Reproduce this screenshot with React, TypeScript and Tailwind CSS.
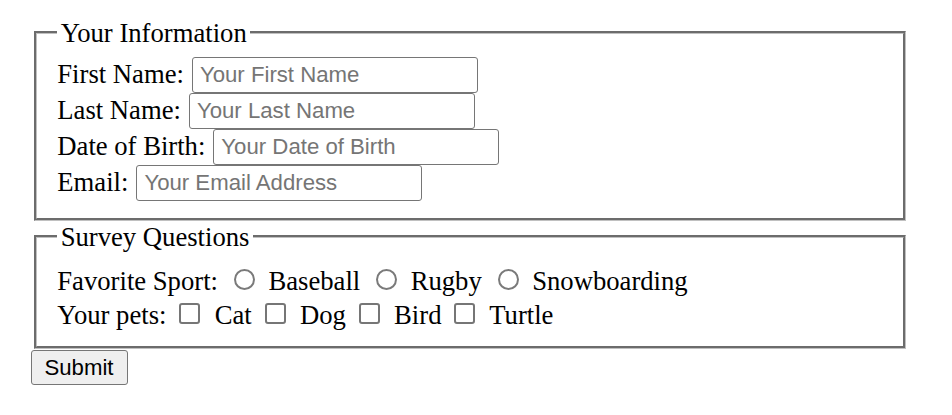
import React from "react";

function Radio() {
  return (
    <span className="inline-block h-[21px] w-[21px] rounded-full border-2 border-[#7a7a7a] bg-white ml-[9.3px] mr-[6.8px]" />
  );
}

function Check() {
  return (
    <span className="inline-block h-[21px] w-[21px] rounded-[3px] border-2 border-[#767676] bg-white ml-[6.3px] mr-[7.6px]" />
  );
}

function Row({ label, placeholder }: { label: string; placeholder: string }) {
  return (
    <div className="flex h-[36px] items-start gap-[8px]">
      <span className="leading-[34px] whitespace-nowrap">{label}</span>
      <input
        type="text"
        placeholder={placeholder}
        className="h-[36px] w-[286px] rounded-[3px] border border-[#767676] bg-white px-[7px] pt-[1px] font-['Liberation_Sans',Arial,sans-serif] text-[22.2px] text-black outline-none placeholder:text-[#757575]"
      />
    </div>
  );
}

export default function App() {
  return (
    <div className="min-h-[415px] bg-white pl-[30.5px] pt-[16.7px] font-['Liberation_Serif','Times_New_Roman',serif] text-[26.67px] text-black">
      <fieldset className="ml-[3.5px] w-[872px] border-[3px] border-[#c0c0c0] [border-style:groove] pb-[16.7px] pl-[20.3px] pt-[8.3px]">
        <legend className="px-[3.33px] leading-[32px]">Your Information</legend>
        <Row label="First Name:" placeholder="Your First Name" />
        <Row label="Last Name:" placeholder="Your Last Name" />
        <Row label="Date of Birth:" placeholder="Your Date of Birth" />
        <Row label="Email:" placeholder="Your Email Address" />
      </fieldset>
      <fieldset className="ml-[3.5px] w-[872px] border-[3px] border-[#c0c0c0] [border-style:groove] pb-[12.4px] pl-[20.3px] pt-[13.8px]">
        <legend className="px-[3.33px] leading-[32px]">Survey Questions</legend>
        <div className="h-[33.4px] whitespace-nowrap leading-[31px]">
          Favorite Sport:{" "}
          <Radio />{" "}
          Baseball{" "}
          <Radio />{" "}
          Rugby{" "}
          <Radio />{" "}
          Snowboarding
        </div>
        <div className="h-[33.4px] whitespace-nowrap leading-[31px]">
          Your pets:{" "}
          <Check />{" "}
          Cat{" "}
          <Check />{" "}
          Dog{" "}
          <Check />{" "}
          Bird{" "}
          <Check />{" "}
          Turtle
        </div>
      </fieldset>
      <button
        type="button"
        className="mt-[1.7px] block h-[35px] w-[97px] rounded-[3px] border border-[#767676] bg-[#efefef] font-['Liberation_Sans',Arial,sans-serif] text-[22.2px] text-black"
      >
        Submit
      </button>
    </div>
  );
}
